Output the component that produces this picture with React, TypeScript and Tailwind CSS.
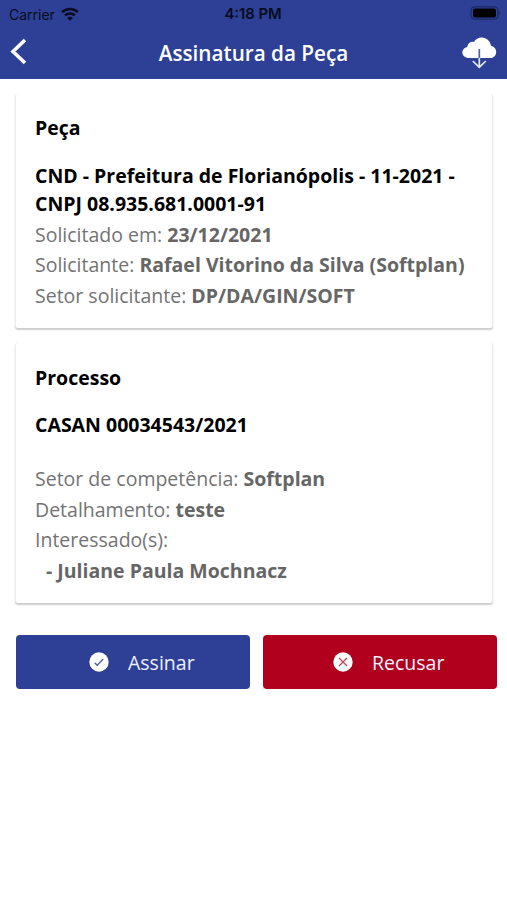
import type { ReactNode } from 'react';

const sans = "font-['Open_Sans','Noto_Sans',sans-serif]";

function Card({ title, className, children }: { title: string; className: string; children: ReactNode }) {
  return (
    <section
      className={`mr-[14px] ml-[15px] rounded-[3px] border-x border-[#ececec] bg-white px-[19px] shadow-[0_1.5px_1.5px_rgba(0,0,0,0.2)] ${className}`}
    >
      <h2 className="text-[19.5px] leading-7 font-bold text-black">{title}</h2>
      {children}
    </section>
  );
}

function Field({ label, value }: { label: string; value?: string }) {
  return (
    <div className="h-[30.6px] text-[19.5px] leading-[30.6px] whitespace-nowrap text-[#737373]">
      {label} {value && <b className="font-bold text-[#666]">{value}</b>}
    </div>
  );
}

function StatusBar() {
  return (
    <div className="flex h-7 items-center justify-between pr-[5px] pl-[9px] font-['Inter','Liberation_Sans',sans-serif] text-[14px] text-[#080c20]">
      <div className="flex w-[120px] items-center gap-[6px]">
        <span>Carrier</span>
        <svg width="18" height="14" viewBox="0 0 18 14" fill="none" stroke="currentColor" strokeWidth="2.5">
          <path d="M1 5.2C5.5.9 12.5.9 17 5.2" />
          <path d="M4 8.4c2.8-2.6 7.2-2.6 10 0" />
          <path d="M6.2 10.9c1.600-1.400 4-1.400 5.600 0L9 13.800z" fill="currentColor" stroke="none" />
        </svg>
      </div>
      <span className="mr-[5px] text-[14.8px] font-semibold">4:18 PM</span>
      <div className="flex w-[120px] justify-end">
        <svg className="mb-[2px]" width="32" height="14" viewBox="0 0 32 14">
          <rect x="1" y=".8" width="27" height="12.4" rx="3.6" fill="none" stroke="#1c2863" strokeWidth="1.2" />
          <rect x="3" y="2.6" width="23" height="8.800" rx="2" fill="#000" />
          <path d="M29.3 4.8q2 2.2 0 4.4z" fill="#1c2863" />
        </svg>
      </div>
    </div>
  );
}

export default function App() {
  return (
    <main className={`h-[900px] w-[507px] overflow-hidden bg-white ${sans}`}>
      <header className="h-[79px] bg-[#2d4095]">
        <StatusBar />
        <div className="flex h-[51px] items-center justify-between px-[10px]">
          <svg className="mb-[5px]" width="36" height="28" viewBox="0 0 36 28" fill="none" stroke="#fff" strokeWidth="3.6">
            <path d="M15 3 3 14.500 15 26" />
          </svg>
          <h1 className="mb-[2px] text-[20.7px] leading-7 font-semibold text-white">Assinatura da Peça</h1>
          <svg className="mb-[2px]" width="36" height="33" viewBox="0 0 36 33">
            <path
              d="M8 22C4 22 1.300 19.300 1.300 16.500c0-2.800 2-5 4.900-5.500C6.600 7.500 10 5 13 6c1.500-3 4.500-4.500 7.700-4.500 5 0 8.800 3.700 9.200 8.300 3.200.7 5.300 3 5.300 6.100C35.200 19.500 32.500 22 29 22z"
              fill="#fff"
            />
            <path d="M18.300 13v9" stroke="#5362a8" strokeWidth="1.700" />
            <path d="M18.300 22v9M11.800 25l6.500 6.300 6.500-6.300" fill="none" stroke="#e6e9f6" strokeWidth="1.700" />
          </svg>
        </div>
      </header>

      <Card title="Peça" className="mt-[15px] h-[234px] pt-[20px]">
        <p className="mt-5 mb-[1.500px] text-[19.5px] leading-7 font-bold whitespace-nowrap text-black">
          CND - Prefeitura de Florianópolis - 11-2021 -<br />
          CNPJ 08.935.681.0001-91
        </p>
        <Field label="Solicitado em:" value="23/12/2021" />
        <Field label="Solicitante:" value="Rafael Vitorino da Silva (Softplan)" />
        <Field label="Setor solicitante:" value="DP/DA/GIN/SOFT" />
      </Card>

      <Card title="Processo" className="mt-[15px] h-[260px] pt-[21px]">
        <p className="mt-[19px] mb-[25px] text-[19.5px] leading-7 font-bold text-black">CASAN 00034543/2021</p>
        <Field label="Setor de competência:" value="Softplan" />
        <Field label="Detalhamento:" value="teste" />
        <Field label="Interessado(s):" />
        <div className="pl-[11px] text-[19.5px] leading-[30.6px] font-bold text-[#666]">- Juliane Paula Mochnacz</div>
      </Card>

      <div className="mt-8 flex gap-[13px] pl-4 text-[19.5px] text-[#eef1ff]">
        <button className="flex h-[54px] w-[234px] items-center rounded-[4px] bg-[#2d4095] pl-[73px]">
          <svg className="mb-px" width="20" height="20" viewBox="0 0 20 20">
            <circle cx="10" cy="10" r="9.700" fill="#fff" />
            <path d="M5.700 10.700l2.500 2.500 6-6.200" fill="none" stroke="#4b5ba6" strokeWidth="1.300" />
          </svg>
          <span className="mt-[2px] ml-[19px]">Assinar</span>
        </button>
        <button className="flex h-[54px] w-[234px] items-center rounded-[4px] bg-[#b0001e] pl-[70px]">
          <svg className="mb-px" width="20" height="20" viewBox="0 0 20 20">
            <circle cx="10" cy="10" r="9.700" fill="#fff" />
            <path d="M6 6l8 8M14 6l-8 8" fill="none" stroke="#c0405a" strokeWidth="1.200" />
          </svg>
          <span className="mt-[2px] ml-[19px]">Recusar</span>
        </button>
      </div>
    </main>
  );
}
